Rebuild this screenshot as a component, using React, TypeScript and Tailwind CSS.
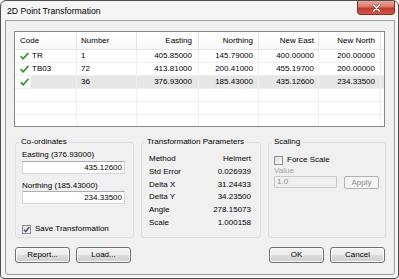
import React from "react"

const rows = [
  { code: "TR", number: "1", easting: "405.85000", northing: "145.79000", newEast: "400.00000", newNorth: "200.00000", selected: false },
  { code: "TB03", number: "72", easting: "413.81000", northing: "200.41000", newEast: "455.19700", newNorth: "200.00000", selected: false },
  { code: "", number: "36", easting: "376.93000", northing: "185.43000", newEast: "435.12600", newNorth: "234.33500", selected: true },
]

const params = [
  ["Method", "Helmert"],
  ["Std Error", "0.026939"],
  ["Delta X", "31.24433"],
  ["Delta Y", "34.23500"],
  ["Angle", "278.15073"],
  ["Scale", "1.000158"],
]

function GreenCheck() {
  return (
    <svg width="9" height="8" viewBox="0 0 9 8">
      <path d="M0.8 4.2 L3.2 6.8 L8.4 0.9" stroke="#2c9a2c" strokeWidth="1.7" fill="none" strokeLinejoin="round" />
    </svg>
  )
}

function CheckBox({ checked }: { checked?: boolean }) {
  return (
    <div className="w-[9px] h-[9px] border border-[#8e8f8f] bg-[linear-gradient(135deg,#dcdcdc,#f8f8f8)] flex items-center justify-center shrink-0">
      {checked && (
        <svg width="7" height="7" viewBox="0 0 7 7">
          <path d="M1 3.6 L2.8 5.6 L6.2 1" stroke="#3b4f86" strokeWidth="1.4" fill="none" />
        </svg>
      )}
    </div>
  )
}

function Button({ label, disabled, w = "w-[55px]" }: { label: string; disabled?: boolean; w?: string }) {
  return (
    <div
      className={
        disabled
          ? `${w} h-[13px] rounded-[2px] border border-[#adb2b5] bg-[#f4f4f4] text-[#8a8a8a] flex items-center justify-center`
          : `${w} h-[16px] rounded-[3px] border border-[#707070] bg-[linear-gradient(#f2f2f2,#ebebeb_50%,#dddddd_50%,#cfcfcf)] shadow-[inset_0_0_0_1px_#fbfbfb] flex items-center justify-center`
      }
    >
      {label}
    </div>
  )
}

const headCell = "border-r border-[#e2e5ea] flex items-center"
const bodyCell = "border-r border-b border-[#efefef] leading-[12px]"

export default function App() {
  return (
    <div className="w-[399px] h-[279px] bg-white font-['Liberation_Sans',Arial,sans-serif] text-[8px] text-black">
      <div className="w-[399px] h-[279px] rounded-t-[6px] rounded-b-[4px] border border-[#4f4f4f] bg-[#f5f5f5] flex flex-col">
        {/* Title bar */}
        <div className="h-[19px] flex items-start justify-between shrink-0">
          <div className="pl-[6px] pt-[5px] text-[8.7px] leading-[11px]">2D Point Transformation</div>
          <div className="mr-[3px] w-[38px] h-[14px] rounded-b-[4px] border border-t-0 border-[#8a2e26] bg-[linear-gradient(#e7a69d,#d47a6f_45%,#c0392c_55%,#d0574a)] flex items-center justify-center">
            <svg width="9" height="8" viewBox="0 0 9 8">
              <path d="M1.5 1 L7.5 7 M7.5 1 L1.5 7" stroke="#6b1d17" strokeWidth="2.6" strokeLinecap="round" opacity="0.5" />
              <path d="M1.5 1 L7.5 7 M7.5 1 L1.5 7" stroke="#ffffff" strokeWidth="1.6" strokeLinecap="round" />
            </svg>
          </div>
        </div>

        {/* Client area */}
        <div className="flex-1 ml-[4px] mr-[3px] mb-[3px] border border-[#9c9c9c] rounded-b-[3px] bg-[#f0f0f0] flex flex-col">
          {/* List view */}
          <div className="ml-[8px] mt-[10px] w-[371px] h-[96px] border border-[#828790] bg-white overflow-hidden">
            <div className="grid grid-cols-[62px_60px_62px_60px_60px_62px_1fr] h-[18px] border-b border-[#e5e5e5] bg-[linear-gradient(#ffffff,#f8f9fa)]">
              <div className={`${headCell} pl-[5px]`}>Code</div>
              <div className={`${headCell} pl-[4px]`}>Number</div>
              <div className={`${headCell} justify-end pr-[6px]`}>Easting</div>
              <div className={`${headCell} justify-end pr-[5px]`}>Northing</div>
              <div className={`${headCell} justify-end pr-[4px]`}>New East</div>
              <div className={`${headCell} justify-end pr-[5px]`}>New North</div>
              <div />
            </div>
            {rows.map((r, i) => (
              <div
                key={i}
                className={`grid grid-cols-[62px_60px_62px_60px_60px_62px_1fr] h-[13px] ${r.selected ? "bg-[#e6e6e6]" : ""}`}
              >
                <div className={`${bodyCell} flex`}>
                  <div className="w-[16px] bg-white flex items-center pl-[5px]">
                    <GreenCheck />
                  </div>
                  <div className="pl-[1px]">{r.code}</div>
                </div>
                <div className={`${bodyCell} pl-[4px]`}>{r.number}</div>
                <div className={`${bodyCell} text-right pr-[6px]`}>{r.easting}</div>
                <div className={`${bodyCell} text-right pr-[5px]`}>{r.northing}</div>
                <div className={`${bodyCell} text-right pr-[4px]`}>{r.newEast}</div>
                <div className={`${bodyCell} text-right pr-[5px]`}>{r.newNorth}</div>
                <div className="border-b border-[#efefef]" />
              </div>
            ))}
            {[0, 1, 2].map((i) => (
              <div key={i} className="grid grid-cols-[62px_60px_62px_60px_60px_62px_1fr] h-[13px]">
                <div className={bodyCell} />
                <div className={bodyCell} />
                <div className={bodyCell} />
                <div className={bodyCell} />
                <div className={bodyCell} />
                <div className={bodyCell} />
                <div className="border-b border-[#efefef]" />
              </div>
            ))}
          </div>

          {/* Group boxes */}
          <div className="flex ml-[9px] mt-[10px] gap-[6px]">
            <fieldset className="w-[119px] h-[101px] border border-[#d5dfe5] rounded-[3px] p-0 m-0">
              <legend className="ml-[3px] px-[2px] leading-[10px]">Co-ordinates</legend>
              <div className="pl-[6px] pt-[3px] leading-[10px]">
                <div>Easting (376.93000)</div>
                <div className="mt-[1px] w-[103px] h-[13px] border border-[#d5d8de] border-t-[#abadb3] bg-white text-right pr-[2px] leading-[11px]">
                  435.12600
                </div>
                <div className="mt-[7px]">Northing (185.43000)</div>
                <div className="mt-[0px] w-[103px] h-[13px] border border-[#d5d8de] border-t-[#abadb3] bg-white text-right pr-[2px] leading-[11px]">
                  234.33500
                </div>
                <div className="mt-[20px] flex items-center gap-[4px]">
                  <CheckBox checked />
                  <span>Save Transformation</span>
                </div>
              </div>
            </fieldset>

            <fieldset className="w-[120px] h-[101px] border border-[#d5dfe5] rounded-[3px] p-0 m-0 ml-[1px]">
              <legend className="ml-[3px] px-[2px] leading-[10px]">Transformation Parameters</legend>
              <div className="pl-[7px] pr-[9px] pt-[6px] leading-[12.8px]">
                {params.map(([k, v]) => (
                  <div key={k} className="flex justify-between">
                    <span>{k}</span>
                    <span>{v}</span>
                  </div>
                ))}
              </div>
            </fieldset>

            <fieldset className="w-[118px] h-[101px] border border-[#d5dfe5] rounded-[3px] p-0 m-0 ml-[1px]">
              <legend className="ml-[3px] px-[2px] leading-[10px]">Scaling</legend>
              <div className="pl-[5px] pt-[8px] leading-[10px]">
                <div className="flex items-center gap-[4px] h-[10px]">
                  <CheckBox />
                  <span>Force Scale</span>
                </div>
                <div className="text-[#a3a3a3] mt-[1px]">Value</div>
                <div className="flex gap-[7px]">
                  <div className="w-[63px] h-[12px] border border-[#c9c9c9] rounded-[1px] bg-[#f0f0f0] text-[#8f8f8f] pl-[2px] leading-[10px]">
                    1.0
                  </div>
                  <Button label="Apply" disabled w="w-[35px]" />
                </div>
              </div>
            </fieldset>
          </div>

          {/* Buttons */}
          <div className="flex justify-between mt-[9px] ml-[9px] mr-[9px]">
            <div className="flex gap-[6px]">
              <Button label="Report..." />
              <Button label="Load..." />
            </div>
            <div className="flex gap-[6px]">
              <Button label="OK" />
              <Button label="Cancel" />
            </div>
          </div>
        </div>
      </div>
    </div>
  )
}
